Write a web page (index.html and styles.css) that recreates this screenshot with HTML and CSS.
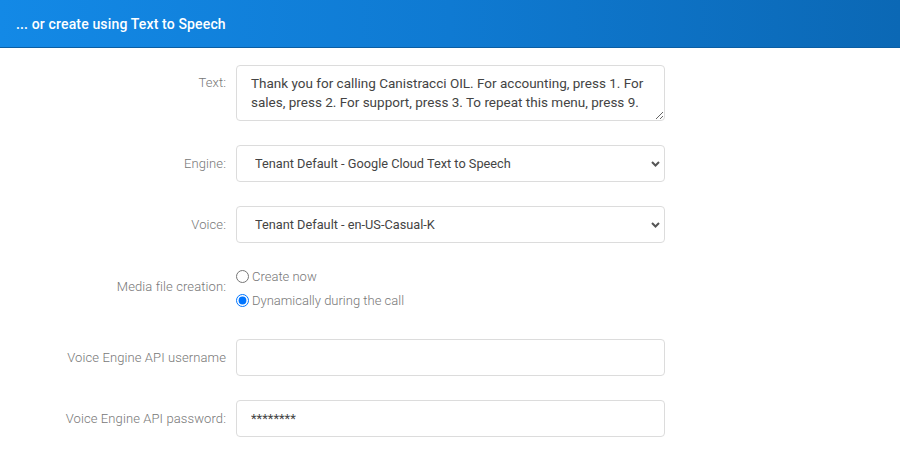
FILE: index.html
```html
<!DOCTYPE html>
<html>
<head>
<meta charset="utf-8">
<link rel="stylesheet" href="styles.css">
</head>
<body>
<div class="header">... or create using Text to Speech</div>
<form class="form">
  <div class="row row-text">
    <label class="lbl">Text:</label>
    <textarea class="ctl ta">Thank you for calling Canistracci OIL. For accounting, press 1. For sales, press 2. For support, press 3. To repeat this menu, press 9.</textarea>
  </div>
  <div class="row">
    <label class="lbl">Engine:</label>
    <select class="ctl sel"><option>Tenant Default - Google Cloud Text to Speech</option></select>
  </div>
  <div class="row">
    <label class="lbl">Voice:</label>
    <select class="ctl sel"><option>Tenant Default - en-US-Casual-K</option></select>
  </div>
  <div class="row row-radio">
    <label class="lbl">Media file creation:</label>
    <div class="radios">
      <label class="radio"><input type="radio" name="m"> Create now</label>
      <label class="radio"><input type="radio" name="m" checked> Dynamically during the call</label>
    </div>
  </div>
  <div class="row">
    <label class="lbl">Voice Engine API username</label>
    <input class="ctl inp" type="text">
  </div>
  <div class="row">
    <label class="lbl">Voice Engine API password:</label>
    <input class="ctl inp" type="text" value="********">
  </div>
</form>
</body>
</html>
```
FILE: styles.css
```css
html, body { margin: 0; padding: 0; background: #fff; }
body { font-family: Roboto, "Noto Sans", sans-serif; width: 900px; height: 453px; overflow: hidden; }
.header {
  height: 48px;
  box-sizing: border-box;
  background: linear-gradient(90deg, #1389e6 0%, #0f7ad2 50%, #0b68b5 100%);
  border-bottom: 1px solid #0b5ea3;
  color: #fff;
  font-weight: 500;
  font-size: 14px;
  letter-spacing: 0.15px;
  line-height: 48px;
  padding-left: 16px;
}
.form { padding-top: 17px; display: flex; flex-direction: column; gap: 24px; }
.row { display: flex; align-items: center; }
.row-text { align-items: flex-start; }
.lbl {
  width: 236px;
  padding-right: 10px;
  box-sizing: border-box;
  text-align: right;
  font-size: 13px;
  color: #777;
  font-weight: 300;
  letter-spacing: 0.1px;
}
.row-text .lbl { padding-top: 10px; }
.ctl {
  width: 429px;
  box-sizing: border-box;
  border: 1px solid #dcdcdc;
  border-radius: 4px;
  font-family: Roboto, "Noto Sans", sans-serif;
  font-size: 13px;
  color: #444;
  background: #fff;
  margin: 0;
  outline: none;
}
.ta { height: 56px; padding: 8px 14px; font-size: 13.5px; line-height: 19px; resize: vertical; }
.sel {
  height: 37px;
  font-size: 12.75px;
  padding: 0 14px 0 18px;
  -webkit-appearance: none;
  appearance: none;
  background: #fff url("data:image/svg+xml;utf8,<svg xmlns='http://www.w3.org/2000/svg' width='9' height='6' viewBox='0 0 9 6'><path d='M1 1l3.5 3.5L8 1' fill='none' stroke='%23555' stroke-width='2'/></svg>") no-repeat right 4px center;
}
.inp { height: 37px; padding: 0 14px; }
.radios { display: flex; flex-direction: column; gap: 5px; }
.row-radio .lbl { margin-top: -4px; }
.radio { font-size: 13px; color: #777; font-weight: 300; display: flex; align-items: center; height: 19px; }
.radio input { margin: 0 3px 0 0; width: 13px; height: 13px; }
.row-radio + .row { margin-top: 5px; }
```
